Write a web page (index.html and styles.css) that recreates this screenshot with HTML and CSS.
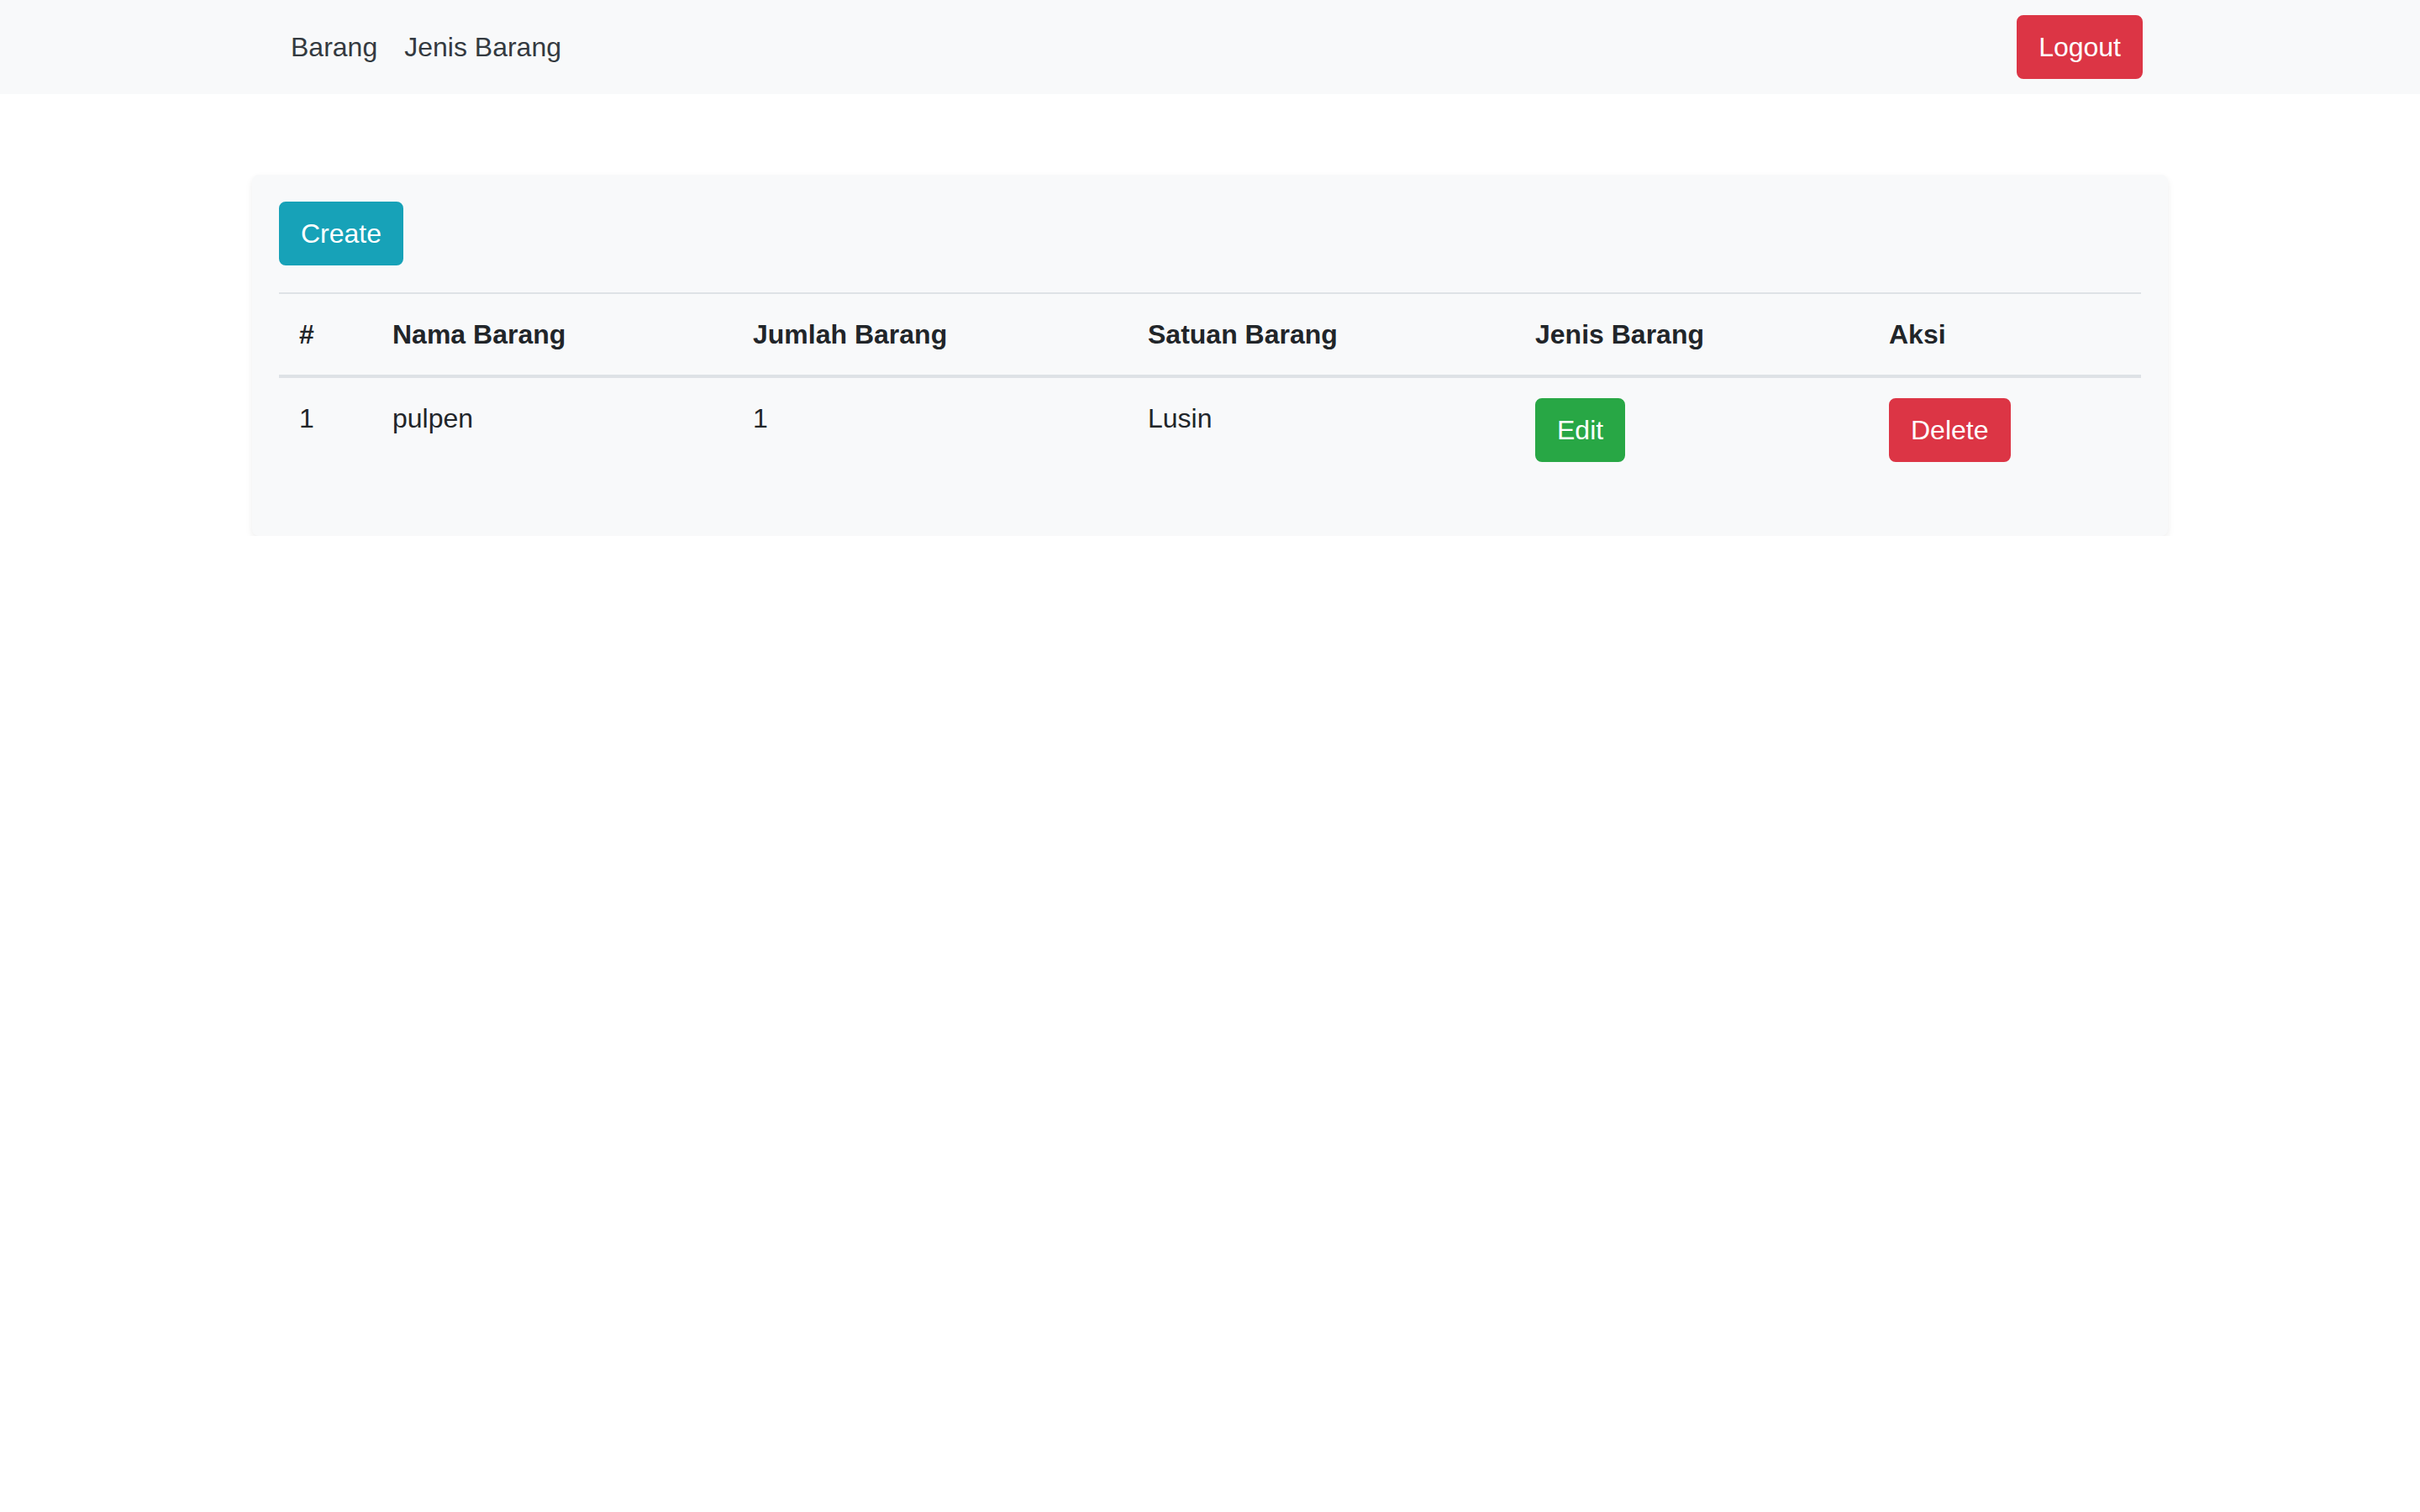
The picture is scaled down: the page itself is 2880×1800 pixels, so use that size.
FILE: index.html
```html
<!DOCTYPE html>
<html lang="id">
<head>
<meta charset="utf-8">
<title>Barang</title>
<link rel="stylesheet" href="styles.css">
</head>
<body>
<nav class="navbar">
  <div class="nav-inner">
    <ul class="nav-list">
      <li><a class="nav-link" href="#">Barang</a></li>
      <li><a class="nav-link" href="#">Jenis Barang</a></li>
    </ul>
    <button class="btn btn-danger">Logout</button>
  </div>
</nav>
<main class="container">
  <div class="card">
    <button class="btn btn-info">Create</button>
    <table class="table">
      <colgroup>
        <col class="c1"><col class="c2"><col class="c3"><col class="c4"><col class="c5"><col class="c6">
      </colgroup>
      <thead>
        <tr>
          <th>#</th>
          <th>Nama Barang</th>
          <th>Jumlah Barang</th>
          <th>Satuan Barang</th>
          <th>Jenis Barang</th>
          <th>Aksi</th>
        </tr>
      </thead>
      <tbody>
        <tr>
          <td>1</td>
          <td>pulpen</td>
          <td>1</td>
          <td>Lusin</td>
          <td><button class="btn btn-success">Edit</button></td>
          <td><button class="btn btn-danger">Delete</button></td>
        </tr>
      </tbody>
    </table>
  </div>
</main>
</body>
</html>
```

FILE: styles.css
```css
* { box-sizing: border-box; }

html, body {
  margin: 0;
  padding: 0;
  background: #ffffff;
}

body {
  font-family: "Liberation Sans", Arial, sans-serif;
  font-size: 32px;
  line-height: 48px;
  color: #212529;
}

.navbar {
  background: #f8f9fa;
  padding: 16px 0;
}

.nav-inner {
  width: 2220px;
  margin: 0 auto;
  display: flex;
  align-items: center;
  justify-content: space-between;
}

.nav-list {
  list-style: none;
  margin: 0;
  padding: 0;
  display: flex;
}

.nav-link {
  display: block;
  padding: 16px 16px;
  color: rgba(0, 0, 0, 0.8);
  color: #343a40;
  text-decoration: none;
}

.btn {
  display: inline-block;
  font-family: inherit;
  font-size: 32px;
  line-height: 48px;
  padding: 12px 24px;
  border: 2px solid transparent;
  border-radius: 8px;
  color: #ffffff;
  cursor: pointer;
}

.btn-danger { background: #dc3545; border-color: #dc3545; }
.btn-info { background: #17a2b8; border-color: #17a2b8; }
.btn-success { background: #28a745; border-color: #28a745; }

.container {
  width: 2280px;
  margin: 96px auto 0;
}

.card {
  background: #f8f9fa;
  border-radius: 8px;
  padding: 32px;
  box-shadow: 0 4px 8px rgba(0, 0, 0, 0.075);
}

.card .btn-info {
  margin-bottom: 32px;
}

.table {
  width: 100%;
  border-collapse: collapse;
  margin-bottom: 32px;
  table-layout: fixed;
}

.c1 { width: 111px; }
.c2 { width: 429px; }
.c3 { width: 470px; }
.c4 { width: 461px; }
.c5 { width: 421px; }
.c6 { width: auto; }

.table th,
.table td {
  padding: 24px;
  text-align: left;
  vertical-align: top;
  border-top: 2px solid #dee2e6;
}

.table th {
  font-weight: bold;
  vertical-align: bottom;
  border-bottom: 4px solid #dee2e6;
}
```
